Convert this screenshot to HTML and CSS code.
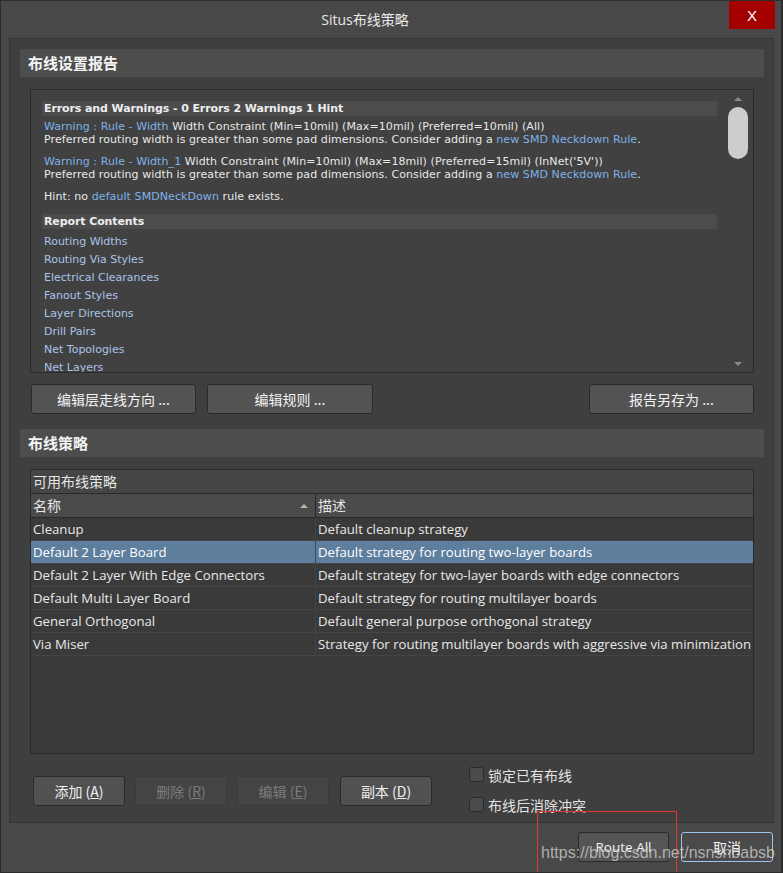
FILE: index.html
```html
<!DOCTYPE html>
<html lang="zh-CN">
<head>
<meta charset="utf-8">
<title>Situs布线策略</title>
<link rel="stylesheet" href="styles.css">
</head>
<body>
<div class="window">
  <div class="titlebar">
    <div class="title">Situs布线策略</div>
    <div class="close">X</div>
  </div>
  <div class="panel">
    <div class="section-h">布线设置报告</div>
    <div class="report">
      <div class="report-body">
        <div class="rbar">Errors and Warnings - 0 Errors 2 Warnings 1 Hint</div>
        <p class="rp"><span class="lk">Warning : Rule - Width</span> Width Constraint (Min=10mil) (Max=10mil) (Preferred=10mil) (All)<br>Preferred routing width is greater than some pad dimensions. Consider adding a <span class="lk">new SMD Neckdown Rule</span>.</p>
        <p class="rp"><span class="lk">Warning : Rule - Width_1</span> Width Constraint (Min=10mil) (Max=18mil) (Preferred=15mil) (InNet('5V'))<br>Preferred routing width is greater than some pad dimensions. Consider adding a <span class="lk">new SMD Neckdown Rule</span>.</p>
        <p class="rp hint">Hint: no <span class="lk">default SMDNeckDown</span> rule exists.</p>
        <div class="rbar">Report Contents</div>
        <ul class="rlist">
          <li>Routing Widths</li>
          <li>Routing Via Styles</li>
          <li>Electrical Clearances</li>
          <li>Fanout Styles</li>
          <li>Layer Directions</li>
          <li>Drill Pairs</li>
          <li>Net Topologies</li>
          <li>Net Layers</li>
        </ul>
      </div>
      <div class="vscroll">
        <span class="arr up"></span>
        <span class="thumb"></span>
        <span class="arr down"></span>
      </div>
    </div>
    <div class="btn-row">
      <div class="btn w165">编辑层走线方向 ...</div>
      <div class="btn w166">编辑规则 ...</div>
      <div class="btn w165 push">报告另存为 ...</div>
    </div>
    <div class="section-h sh2">布线策略</div>
    <div class="table">
      <div class="t-title">可用布线策略</div>
      <div class="t-head">
        <div class="c1">名称<span class="sort"></span></div>
        <div class="c2">描述</div>
      </div>
      <div class="t-row"><div class="c1">Cleanup</div><div class="c2">Default cleanup strategy</div></div>
      <div class="t-row sel"><div class="c1">Default 2 Layer Board</div><div class="c2">Default strategy for routing two-layer boards</div></div>
      <div class="t-row"><div class="c1">Default 2 Layer With Edge Connectors</div><div class="c2">Default strategy for two-layer boards with edge connectors</div></div>
      <div class="t-row"><div class="c1">Default Multi Layer Board</div><div class="c2">Default strategy for routing multilayer boards</div></div>
      <div class="t-row"><div class="c1">General Orthogonal</div><div class="c2">Default general purpose orthogonal strategy</div></div>
      <div class="t-row"><div class="c1">Via Miser</div><div class="c2">Strategy for routing multilayer boards with aggressive via minimization</div></div>
    </div>
    <div class="bottom-row">
      <div class="btn sb">添加 (<u>A</u>)</div>
      <div class="btn sb dis">删除 (<u>R</u>)</div>
      <div class="btn sb dis">编辑 (<u>E</u>)</div>
      <div class="btn sb b4">副本 (<u>D</u>)</div>
      <div class="checks">
        <label class="cb"><span class="box"></span>锁定已有布线</label>
        <label class="cb"><span class="box"></span>布线后消除冲突</label>
      </div>
    </div>
  </div>
  <div class="footer">
    <div class="btn fb route">Route All</div>
    <div class="btn fb cancel">取消</div>
  </div>
  <div class="redbox"></div>
  <div class="wm">https://blog.csdn.net/nsnsnbabsb</div>
</div>
</body>
</html>
```

FILE: styles.css
```css
* { box-sizing: border-box; }
html, body { margin: 0; padding: 0; background: #484848; }
body {
  width: 783px;
  height: 873px;
  overflow: hidden;
  font-family: "Noto Sans CJK SC", sans-serif;
}
.window {
  position: relative;
  width: 783px;
  height: 873px;
  background: #484848;
  border: 1px solid #2c2c2c;
  border-right-width: 2px;
  display: flex;
  flex-direction: column;
  overflow: hidden;
}
.titlebar {
  height: 37px;
  display: flex;
  flex-shrink: 0;
}
.title {
  flex: 1;
  text-align: center;
  font-size: 14px;
  line-height: 37px;
  color: #e8e8e8;
  font-family: "Open Sans", "Noto Sans CJK SC", sans-serif;
}
.close {
  width: 46px;
  height: 28px;
  margin-right: 6px;
  background: #a30000;
  color: #ffffff;
  font-family: "Liberation Sans", sans-serif;
  font-size: 15px;
  display: flex;
  align-items: center;
  justify-content: center;
}
.panel {
  margin-left: 8px;
  width: 765px;
  height: 785px;
  flex-shrink: 0;
  background: #3f3f3f;
  border: 1px solid #363636;
  padding: 10px 9px 0 10px;
  display: flex;
  flex-direction: column;
}
.section-h {
  height: 28px;
  flex-shrink: 0;
  background: #4d4d4d;
  padding-left: 8px;
  font-size: 15px;
  font-weight: bold;
  line-height: 28px;
  color: #f4f4f4;
}
.sh2 { margin-top: 15px; }
.report {
  margin: 12px 10px 0;
  height: 284px;
  flex-shrink: 0;
  border: 1px solid #2a2a2a;
  background: #414141;
  display: flex;
  overflow: hidden;
}
.report-body {
  flex: 1;
  padding: 11px 10px 0 11px;
  overflow: hidden;
  font-family: "DejaVu Sans", sans-serif;
  font-size: 11px;
  color: #e8e8e8;
}
.rbar {
  height: 15px;
  line-height: 15px;
  background: #4c4c4c;
  font-weight: bold;
  padding-left: 2px;
  margin-bottom: 4px;
  color: #eeeeee;
  letter-spacing: -0.1px;
}
.rp {
  margin: 0 0 9px;
  line-height: 13px;
  padding-left: 2px;
  white-space: nowrap;
  letter-spacing: 0.08px;
}
.rp.hint { margin-bottom: 11px; }
.lk { color: #7fb1e8; }
.rlist {
  list-style: none;
  margin: 2px 0 0;
  padding: 0 0 0 2px;
}
.rlist li {
  line-height: 18px;
  color: #a9c4e8;
}
.vscroll {
  width: 26px;
  flex-shrink: 0;
  display: flex;
  flex-direction: column;
  align-items: center;
  padding: 7px 5px 6px 1px;
}
.arr {
  width: 0;
  height: 0;
  border-left: 4px solid transparent;
  border-right: 4px solid transparent;
}
.arr.up { border-bottom: 4px solid #8a8a8a; }
.arr.down { border-top: 4px solid #8a8a8a; margin-top: auto; }
.thumb {
  margin-top: 6px;
  width: 20px;
  height: 52px;
  border-radius: 10px;
  background: #cdcdcd;
}
.btn-row {
  display: flex;
  gap: 11px;
  margin: 11px 10px 0 11px;
  flex-shrink: 0;
}
.btn {
  height: 30px;
  background: #535353;
  border: 1px solid #2a2a2a;
  border-radius: 3px;
  color: #f2f2f2;
  font-size: 14px;
  display: flex;
  align-items: center;
  justify-content: center;
  flex-shrink: 0;
}
.btn u { text-decoration: underline; text-underline-offset: 1px; }
.w165 { width: 165px; }
.w166 { width: 166px; }
.push { margin-left: auto; }
.table {
  margin: 12px 10px 0;
  height: 285px;
  flex-shrink: 0;
  border: 1px solid #2a2a2a;
  background: #3a3a3a;
  display: flex;
  flex-direction: column;
}
.t-title {
  height: 24px;
  background: #454545;
  border-bottom: 1px solid #2a2a2a;
  padding-left: 2px;
  font-size: 14px;
  line-height: 23px;
  color: #e6e6e6;
}
.t-head {
  height: 24px;
  background: #4a4a4a;
  border-bottom: 1px solid #2a2a2a;
  display: grid;
  grid-template-columns: 284px 1fr;
  font-size: 14px;
  line-height: 23px;
  color: #e6e6e6;
}
.t-head .c1 {
  padding-left: 2px;
  display: flex;
  align-items: center;
  justify-content: space-between;
}
.t-head .c2 {
  border-left: 1px solid #2a2a2a;
  padding-left: 2px;
}
.sort {
  width: 0;
  height: 0;
  border-left: 4px solid transparent;
  border-right: 4px solid transparent;
  border-bottom: 4px solid #b0b0b0;
  margin-right: 7px;
}
.t-row {
  height: 23px;
  display: grid;
  grid-template-columns: 284px 1fr;
  border-bottom: 1px solid #444444;
  font-family: "Open Sans", "Noto Sans", sans-serif;
  font-size: 13.2px;
  line-height: 22px;
  color: #e8e8e8;
  white-space: nowrap;
}
.t-row .c1 { padding-left: 2px; overflow: hidden; }
.t-row .c2 { border-left: 1px solid #444444; padding-left: 2px; overflow: hidden; }
.t-row.sel { background: #5e7e9e; color: #ffffff; }
.t-row.sel .c2 { border-left-color: #3a4a5a; }
.bottom-row {
  display: flex;
  align-items: flex-start;
  margin: 13px 0 0 13px;
  flex-shrink: 0;
}
.sb {
  width: 92px;
  margin-top: 9px;
  margin-right: 10px;
  background: #515151;
}
.sb.b4 { margin-left: 1px; margin-right: 0; }
.sb.dis {
  background: #444444;
  border-color: #3b3b3b;
  color: #7c7c7c;
}
.checks {
  margin-left: 37px;
  display: flex;
  flex-direction: column;
  gap: 15px;
}
.cb {
  display: flex;
  align-items: center;
  gap: 4px;
  height: 15px;
  font-size: 14px;
  color: #e4e4e4;
}
.box {
  width: 15px;
  height: 15px;
  background: #4b4b4b;
  border: 1px solid #2b2b2b;
  border-radius: 3px;
}
.footer {
  display: flex;
  justify-content: flex-end;
  gap: 12px;
  padding: 9px 8px 0 0;
}
.fb {
  font-family: "Open Sans", "Noto Sans CJK SC", sans-serif;
  font-size: 13.5px;
}
.route { width: 91px; background: #555555; }
.cancel {
  width: 92px;
  background: #4a4a4a;
  border-color: #9cc6f0;
  font-family: "Noto Sans CJK SC", sans-serif;
  font-size: 14px;
}
.redbox {
  position: absolute;
  left: 536px;
  top: 810px;
  width: 140px;
  height: 70px;
  border: 1px solid #e33535;
}
.wm {
  position: absolute;
  left: 540px;
  top: 843px;
  font-family: "Liberation Sans", sans-serif;
  font-size: 16px;
  line-height: 18px;
  color: rgba(206, 206, 206, 0.78);
  white-space: nowrap;
}
```
